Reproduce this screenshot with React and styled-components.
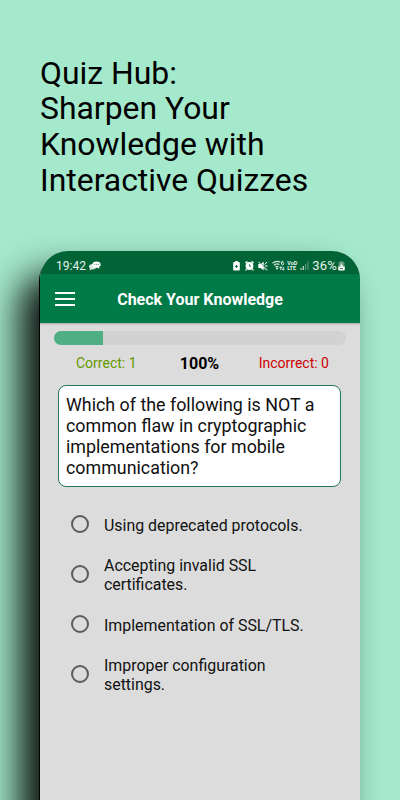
import React from "react";
import styled, { createGlobalStyle } from "styled-components";

const GlobalStyle = createGlobalStyle`
  * { box-sizing: border-box; }
  body { margin: 0; font-family: Roboto, "Liberation Sans", sans-serif; background: #a4e9cb; }
`;

const Page = styled.main`
  width: 400px;
  height: 800px;
  overflow: hidden;
  background: #a4e9cb;
  color: #000;
`;

const Headline = styled.h1`
  margin: 0;
  height: 251px;
  padding: 55.6px 0 0 40px;
  font-size: 31.9px;
  font-weight: 400;
  line-height: 35.7px;
  white-space: pre-line;
`;

const Phone = styled.section`
  width: 320px;
  height: 620px;
  margin-left: 40px;
  overflow: hidden;
  background: #dcdcdc;
  border-radius: 28px 28px 0 0;
  box-shadow: -1px 2px 0 #000, -20px 24px 36px rgba(0, 0, 0, 0.94);
`;

const StatusBar = styled.div`
  height: 23px;
  padding: 6px 15px 0 16px;
  display: flex;
  align-items: center;
  background: #006437;
  color: #e9f3ec;
  font-size: 12px;
`;

const Clock = styled.span`
  width: 33px;
  font-size: 12px;
  line-height: 14px;
`;

const StatusIcons = styled.div`
  margin-left: auto;
  display: flex;
  align-items: center;
`;

const Glyph = styled.svg`
  display: block;
  flex: none;
  margin-left: ${(p) => p.$gap || 0}px;
`;

const Battery = styled.span`
  margin-left: 3px;
  font-size: 13px;
  letter-spacing: 0.2px;
  line-height: 14px;
`;

const AppBar = styled.header`
  height: 49px;
  padding: 2px 15px 0;
  display: grid;
  grid-template-columns: 20px 1fr 20px;
  align-items: center;
  background: #007a47;
  color: #fff;
  box-shadow: 0 1px 2px rgba(0, 0, 0, 0.25);
`;

const BarTitle = styled.h2`
  margin: 0;
  font-size: 16px;
  font-weight: 700;
  line-height: 20px;
  text-align: center;
`;

const MenuButton = styled.button`
  padding: 0;
  margin-bottom: 2px;
  border: 0;
  background: none;
  color: inherit;
`;

const Track = styled.div`
  height: 14px;
  margin: 8px 14px 0;
  overflow: hidden;
  border-radius: 7px;
  background: #d2d2d2;
`;

const Fill = styled.div`
  width: 49px;
  height: 100%;
  background: #4fae84;
`;

const Scores = styled.div`
  height: 40px;
  padding: 8px 31px 0 36px;
  display: grid;
  grid-template-columns: 1fr auto 1fr;
  line-height: 20px;
  font-size: 14px;
`;

const Score = styled.span`
  color: ${(p) => p.$color};
  text-align: ${(p) => p.$align || "left"};
`;

const Percent = styled.strong`
  padding: 1px 6px 0 0;
  font-size: 16px;
  font-weight: 700;
`;

const Question = styled.div`
  width: 283px;
  height: 102px;
  margin-left: 18px;
  padding: 8px 6px 0 7px;
  border: 1px solid #25765a;
  border-radius: 8px;
  background: #fff;
  color: #111;
  font-size: 17.85px;
  line-height: 21.1px;
  white-space: pre-line;
`;

const Options = styled.ul`
  margin: 12px 0 0;
  padding: 0 0 0 31px;
  list-style: none;
`;

const Option = styled.li`
  height: 50px;
  display: flex;
  align-items: center;
  font-size: 15.92px;
  line-height: 19px;
  color: #111;
  white-space: pre-line;
`;

const Radio = styled.span`
  width: 18px;
  height: 18px;
  margin-right: 15px;
  border: 2px solid #5b5b5b;
  border-radius: 50%;
`;

const OptionText = styled.span`
  padding-top: 2px;
`;

const ChatIcon = () => (
  <Glyph width="12" height="10" viewBox="0 0 12 10">
    <path d="M3.5 3C1.5 3 0 4 0 5.7c0 .8.4 1.5 1 2L.5 9.4l2-1c3 .4 4.7-.8 4.7-2.6S5.5 3 3.5 3Z" fill="#d9e9df" />
    <path d="M7.5.6C5 .6 3.3 1.8 3.3 3.7s1.8 3 4.2 3h.8l2 1.1-.3-1.7c1.1-.5 1.7-1.4 1.7-2.5C11.7 1.8 10 .6 7.5.6Z" fill="#fff" />
    <path d="M5.3 3.4h1M7.2 3.4h1M9.1 3.4h1" stroke="#37835c" strokeWidth=".9" />
  </Glyph>
);

const SaverIcon = () => (
  <Glyph width="7" height="10" viewBox="0 0 7 10">
    <path d="M2.2 0h2.6v1h1q1 0 1 1v6.5q0 1-1 1h-4.6q-1 0-1-1V2q0-1 1-1h1Z" fill="#fff" />
    <path d="m3.5 3.8 1.5 1.8-1.5 1.5L2 5.6Z" fill="#006437" />
  </Glyph>
);

const AlarmIcon = () => (
  <Glyph $gap={5} width="9" height="10" viewBox="0 0 9 10">
    <path d="m.4 2 2-1.6M8.6 2l-2-1.6M1.5 8.2.7 9.4M7.5 8.2l.8 1.2" stroke="#fff" strokeWidth="1.3" />
    <circle cx="4.5" cy="5" r="3.9" fill="#fff" />
    <path d="M4.5 3.2v2h1.5" fill="none" stroke="#006437" strokeWidth=".8" />
  </Glyph>
);

const MuteIcon = () => (
  <Glyph $gap={4} width="10" height="10" viewBox="0 0 10 10">
    <path d="M.3 3h2.2L5.7.7v8.6L2.5 6.9H.3Z" fill="#fff" />
    <path d="M6.8 3.5 9 1M6.8 5h2.8M6.8 6.4 9 8.8" fill="none" stroke="#fff" />
    <path d="m1 .4 8 8.4" stroke="#006437" strokeWidth=".8" />
    <path d="m.4.8 8.4 8.6" stroke="#fff" strokeWidth="1" />
  </Glyph>
);

const WifiIcon = () => (
  <Glyph $gap={4} width="13" height="11" viewBox="0 0 13 11">
    <path d="M.5 3.2Q4.5.2 8.3 2M1.9 5.2q2.8-2.3 5.6-.7M3.4 6.9Q5 5.7 6.5 6.8" fill="none" stroke="#d5e8dc" strokeWidth="1.2" />
    <circle cx="5" cy="8.4" r="1" fill="#fff" />
    <path d="M11.3 1.2Q9.4.9 9.4 3t1.2 1.9q1.2 0 1.2-1.2T10.6 2.6q-1 0-1.1.8" fill="none" stroke="#fff" strokeWidth=".8" />
    <path d="M8.7 10V6.8M7.3 8.1l1.4-1.5L10 8.1M11.2 6.7V10M10 8.8l1.2 1.4 1.4-1.4" fill="none" stroke="#fff" strokeWidth=".8" />
  </Glyph>
);

const VolteLabel = styled.span`
  width: 10px;
  margin-left: 2px;
  display: flex;
  flex-direction: column;
  font-size: 5.4px;
  font-weight: 700;
  line-height: 4.8px;
`;

const SignalIcon = () => (
  <Glyph $gap={3} width="9" height="9" viewBox="0 0 9 9">
    <path d="M1 7v2M3.3 5v4" stroke="#d8e9df" strokeWidth="1.1" />
    <path d="M5.6 3v6M7.9.5V9" stroke="#64977c" strokeWidth="1.1" />
  </Glyph>
);

const ChargeIcon = () => (
  <Glyph $gap={1} width="7" height="10" viewBox="0 0 7 10">
    <path d="M2.3 0h2.4v1h1q.8 0 .8 1v3.4h-6V2q0-1 .8-1h1Z" fill="#5f977a" />
    <path d="M.2 5.6h6.6v2.9q0 1-1 1H1.2q-1 0-1-1Z" fill="#fff" />
    <path d="M4 1.2 1.7 5.6h1.5L3 8.2l2.4-3.7H3.8Z" fill="#fff" />
    <path d="M2 7.5h3" stroke="#006437" strokeWidth=".7" />
  </Glyph>
);

const MenuIcon = () => (
  <Glyph width="20" height="14" viewBox="0 0 20 14">
    <path d="M0 1h20M0 7h20M0 13h20" stroke="#fff" strokeWidth="2" />
  </Glyph>
);

const answers = [
  "Using deprecated protocols.",
  "Accepting invalid SSL\ncertificates.",
  "Implementation of SSL/TLS.",
  "Improper configuration\nsettings.",
];

export default function App() {
  return (
    <Page>
      <GlobalStyle />
      <Headline>{"Quiz Hub:\nSharpen Your\nKnowledge with\nInteractive Quizzes"}</Headline>
      <Phone>
        <StatusBar>
          <Clock>19:42</Clock>
          <ChatIcon />
          <StatusIcons>
            <SaverIcon />
            <AlarmIcon />
            <MuteIcon />
            <WifiIcon />
            <VolteLabel><span>VoD</span><span>LTE</span></VolteLabel>
            <SignalIcon />
            <Battery>36%</Battery>
            <ChargeIcon />
          </StatusIcons>
        </StatusBar>
        <AppBar>
          <MenuButton aria-label="Menu"><MenuIcon /></MenuButton>
          <BarTitle>Check Your Knowledge</BarTitle>
        </AppBar>
        <Track><Fill /></Track>
        <Scores>
          <Score $color="#669900">Correct: 1</Score>
          <Percent>100%</Percent>
          <Score $color="#cc0000" $align="right">Incorrect: 0</Score>
        </Scores>
        <Question>
          {"Which of the following is NOT a\ncommon flaw in cryptographic\nimplementations for mobile\ncommunication?"}
        </Question>
        <Options>
          {answers.map((text) => (
            <Option key={text}>
              <Radio />
              <OptionText>{text}</OptionText>
            </Option>
          ))}
        </Options>
      </Phone>
    </Page>
  );
}
